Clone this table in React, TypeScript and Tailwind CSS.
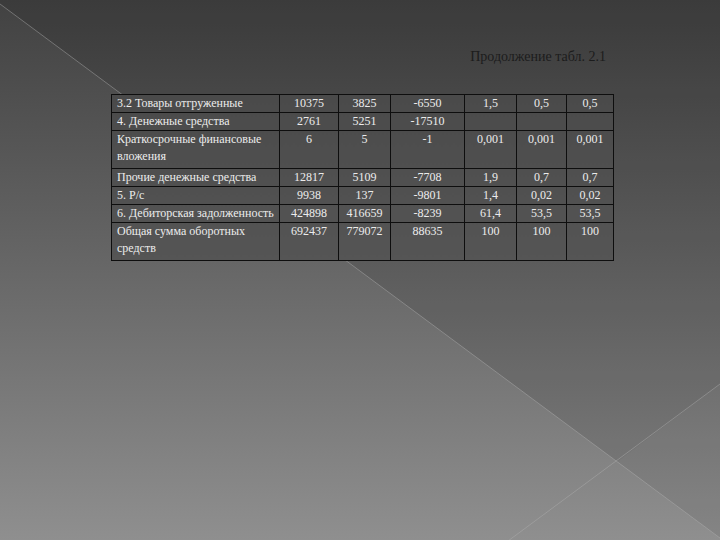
import React from 'react';

type Row = {
  label: string[];
  values: string[];
  tall?: boolean;
};

const rows: Row[] = [
  { label: ['3.2 Товары отгруженные'], values: ['10375', '3825', '-6550', '1,5', '0,5', '0,5'] },
  { label: ['4. Денежные средства'], values: ['2761', '5251', '-17510', '', '', ''] },
  { label: ['Краткосрочные финансовые', 'вложения'], values: ['6', '5', '-1', '0,001', '0,001', '0,001'], tall: true },
  { label: ['Прочие денежные средства'], values: ['12817', '5109', '-7708', '1,9', '0,7', '0,7'] },
  { label: ['5. Р/с'], values: ['9938', '137', '-9801', '1,4', '0,02', '0,02'] },
  { label: ['6. Дебиторская задолженность'], values: ['424898', '416659', '-8239', '61,4', '53,5', '53,5'] },
  { label: ['Общая сумма оборотных', 'средств'], values: ['692437', '779072', '88635', '100', '100', '100'], tall: true },
];

const colWidths = ['w-[168px]', 'w-[59px]', 'w-[52px]', 'w-[74px]', 'w-[52px]', 'w-[50px]', 'w-[47px]'];

function Background() {
  return (
    <svg className="absolute inset-0 w-full h-full pointer-events-none" viewBox="0 0 720 540">
      {/* darker area above the main diagonal */}
      <polygon points="0,4 720,538 720,0 0,0" fill="#000" fillOpacity="0.1" />
      <polygon points="617,462 720,384 720,538" fill="#fff" fillOpacity="0.04" />
      <line x1="0" y1="4" x2="720" y2="538" stroke="#b0b0b0" strokeOpacity="0.45" strokeWidth="1" />
      <line x1="720" y1="384" x2="508" y2="541" stroke="#b0b0b0" strokeOpacity="0.45" strokeWidth="1" />
    </svg>
  );
}

function App() {
  return (
    <div className="relative w-[720px] h-[540px] overflow-hidden bg-gradient-to-b from-[#424242] to-[#8f8f8f] font-['Liberation_Serif',serif]">
      <Background />

      <div className="relative flex flex-col">
        <div className="flex justify-end pr-[114px] pt-[49px]">
          <p className="font-['Liberation_Serif',serif] text-[14px] leading-[16px] text-[#1c1c1c]">Продолжение табл. 2.1</p>
        </div>

        <div className="ml-[111px] mt-[29px]">
          <table className="font-['Liberation_Serif',serif] border-collapse table-fixed w-[502px] text-[12px] leading-[17px] text-[#ececec] bg-gradient-to-b from-[#4a4a4a] to-[#555555]">
            <colgroup>
              {colWidths.map((w, i) => (
                <col key={i} className={w} />
              ))}
            </colgroup>
            <tbody>
              {rows.map((row, i) => (
                <tr key={i} className={row.tall ? 'h-[38px]' : 'h-[18px]'}>
                  <td className="font-['Liberation_Serif',serif] border border-[#0e0e0e] px-[5px] align-top whitespace-nowrap">
                    {row.label.map((l, j) => (
                      <div key={j}>{l}</div>
                    ))}
                  </td>
                  {row.values.map((v, j) => (
                    <td key={j} className="font-['Liberation_Serif',serif] border border-[#0e0e0e] align-top text-center">
                      {v}
                    </td>
                  ))}
                </tr>
              ))}
            </tbody>
          </table>
        </div>
      </div>
    </div>
  );
}

export default App;
